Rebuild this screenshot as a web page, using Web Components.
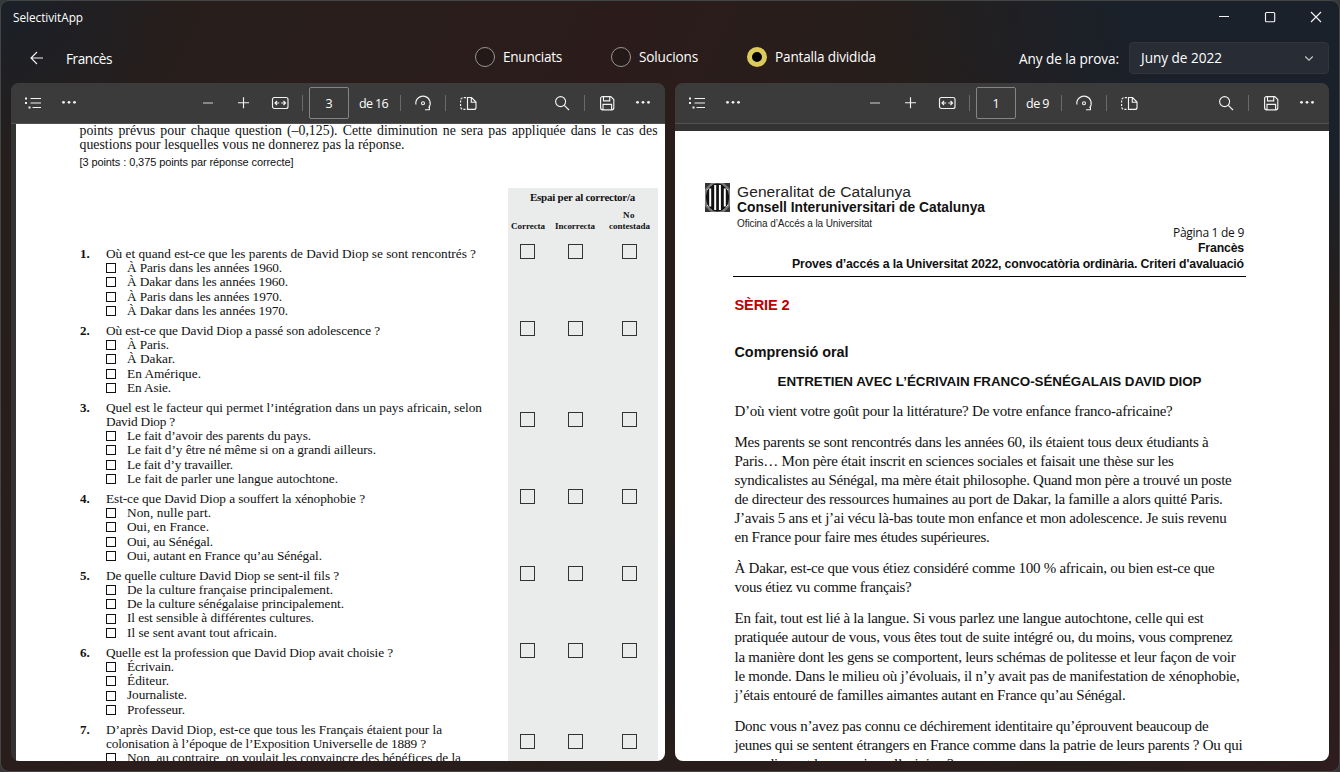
<!DOCTYPE html>
<html lang="ca">
<head>
<meta charset="utf-8">
<title>SelectivitApp</title>
<style>
html,body{margin:0;height:100%;overflow:hidden;background:#34383a}
</style>
</head>
<body>
<selectivit-app></selectivit-app>
<script>
const ICONS = {
  back:'<path d="M15 8H3M9 2L3 8l6 6" />',
  list:'<path d="M5.5 3.5H16M5.5 8H16M7.5 12.5H16"/><path d="M0 3.5h2M0 8h2M3.5 12.5h2" stroke-width="2"/>',
  dots:'<g fill="currentColor" stroke="none"><circle cx="2.5" cy="7.3" r="1.4"/><circle cx="8" cy="7.3" r="1.4"/><circle cx="13.5" cy="7.3" r="1.4"/></g>',
  minus:'<path d="M3 8h10" stroke="#a2a2a2" stroke-width="1.5"/>',
  plus:'<path d="M7.5 2.2v11M2 7.7h11"/>',
  fit:'<rect x=".5" y="2.5" width="15.5" height="11" rx="2"/><path d="M3.4 8h3.8M9.3 8h3.8M5 6L3 8l2 2M11.5 6l2 2-2 2"/>',
  rotate:'<path d="M.9 9.5A7.2 7.2 0 1 1 13.6 12.9M10 14.7h4.4V10.5" /><circle cx="8" cy="8.2" r="1.5"/>',
  view:'<path d="M6 2.6H3.2A2.6 2.6 0 0 0 .6 5.2v6.6a2.6 2.6 0 0 0 2.6 2.6H6" stroke-dasharray="2.2 1.3"/><path d="M7.5 2.5h4l4.5 4.6v5.3a2 2 0 0 1-2 2H7.5zM11.3 2.6v4.6H16"/>',
  search:'<circle cx="6.6" cy="6.6" r="5"/><path d="M10.3 10.3L15 15"/>',
  save:'<path d="M1.6 3.6a2 2 0 0 1 2-2h8.2l3 3v8.2a2 2 0 0 1-2 2H3.6a2 2 0 0 1-2-2zM4.5 1.8v4h6.2v-4M4 14.6V9.3h8.6v5.3"/>',
  min:'<path d="M3 7.5h10"/>',
  max:'<rect x="3.5" y="3.5" width="9.2" height="9.2" rx="1"/>',
  close:'<path d="M3 3l10 10M13 3L3 13"/>',
  chevron:'<path d="M4.2 6.5L8 10.2l3.8-3.7" stroke="#c8c8cc"/>'
};

class UiIcon extends HTMLElement {
  connectedCallback() {
    this.attachShadow({mode:'open'}).innerHTML = `<style>
      :host{display:inline-flex;width:36px;height:32px;align-items:center;justify-content:center;color:#f2f2f2;flex:none}
      svg{display:block;overflow:visible}</style>
      <svg width="16" height="16" viewBox="0 0 16 16" fill="none" stroke="currentColor" stroke-width="1.15">${ICONS[this.getAttribute('name')]}</svg>`;
  }
}

class UiRadio extends HTMLElement {
  connectedCallback() {
    this.attachShadow({mode:'open'}).innerHTML = `<style>
      :host{display:flex;align-items:center;gap:8px;width:136px;height:20px}
      i{box-sizing:border-box;width:20px;height:20px;border-radius:50%;border:1px solid #9c9492;background:#231918;flex:none}
      :host([checked]) i{border:5px solid #dccb5c;background:#000}
      </style><i></i><slot></slot>`;
  }
}

class PdfToolbar extends HTMLElement {
  connectedCallback() {
    const page = this.getAttribute('page'), total = this.getAttribute('total'), w = this.getAttribute('total-width');
    this.attachShadow({mode:'open'}).innerHTML = `<style>
      :host{display:flex;align-items:center;height:40px;background:#3b3b3b;border-bottom:1px solid #525252;flex:none;padding:0 4px;color:#fff;font:12.5px "Open Sans","Noto Sans",sans-serif}
      .mid{display:flex;align-items:center;margin-left:calc(var(--mid) - 76px)}
      .end{display:flex;align-items:center;margin-left:auto}
      hr{border:0;margin:0 4px;width:1px;height:16px;background:#6a6a6a}
      .page{box-sizing:border-box;width:40px;height:32px;border:1px solid #858585;border-radius:2px;display:flex;align-items:center;justify-content:center;margin:0 10px 0 2px}
      .total{margin-right:8px}
      </style>
      <ui-icon name="list"></ui-icon><ui-icon name="dots"></ui-icon>
      <div class="mid"><ui-icon name="minus"></ui-icon><ui-icon name="plus"></ui-icon><ui-icon name="fit"></ui-icon><hr>
      <div class="page">${page}</div><fit-line class="total" w="${w}">de ${total}</fit-line><hr>
      <ui-icon name="rotate"></ui-icon><hr><ui-icon name="view"></ui-icon></div>
      <div class="end"><ui-icon name="search"></ui-icon><hr><ui-icon name="save"></ui-icon><ui-icon name="dots"></ui-icon></div>`;
  }
}

class PdfPane extends HTMLElement {
  connectedCallback() {
    this.attachShadow({mode:'open'}).innerHTML = `<style>
      :host{display:flex;flex-direction:column;width:654px;height:678px;border-radius:8px;overflow:hidden;background:#333}
      .view{flex:1;min-height:0;overflow:hidden;padding:var(--gutter)}
      </style><slot name="bar"></slot><div class="view"><slot></slot></div>`;
  }
}

class ExamQuestion extends HTMLElement {
  connectedCallback() {
    const lines = this.getAttribute('lines').split('|').map(s => s.split('~'));
    const opts = this.getAttribute('options').split('|').map(s => s.split('~'));
    this.attachShadow({mode:'open'}).innerHTML = `<style>
      :host{display:grid;grid-template-columns:26px 402px 150px;font:13.3px/14px "Liberation Serif",serif;color:#111}
      b{padding-top:4px;font-size:13px}
      .body{padding:4px 0 1.4px}
      .opt{display:flex;align-items:center;height:14.4px;line-height:14.4px;gap:11px}
      .opt i{box-sizing:border-box;width:10px;height:10px;border:1px solid #111;flex:none}
      .score{background:#eaecec;display:grid;grid-template-columns:15px 15px 15px;column-gap:33px;padding:${1+14*(lines.length-1)}px 0 0 12px;align-content:start}
      .score i{box-sizing:border-box;height:15px;border:1px solid #333}
      .score i:last-child{margin:0 -6px 0 6px}
      </style><b>${this.getAttribute('n')}.</b>
      <div class="body">${lines.map(l=>`<fit-line w="${l[1]}">${l[0]}</fit-line>`).join('')}
      ${opts.map(l=>`<div class="opt"><i></i><fit-line w="${l[1]}">${l[0]}</fit-line></div>`).join('')}</div>
      <div class="score"><i></i><i></i><i></i></div>`;
  }
}

class ExamPage extends HTMLElement {
  connectedCallback() {
    this.attachShadow({mode:'open'}).innerHTML = `<style>
      :host{display:block;box-sizing:border-box;height:637px;overflow:hidden;background:#fff;padding-left:64px;color:#111;font:13.8px/14px "Liberation Serif",serif}
      .intro{margin-left:-.5px}
      .note{font:11px/14px "Liberation Sans",sans-serif;margin-top:2.9px;margin-left:-.5px}
      .head{display:grid;justify-content:end;width:578px;margin-top:19px}
      .box{box-sizing:border-box;width:150px;height:55px;background:#eaecec;padding:3px 0 0 3px;font:bold 11px/12px "Liberation Serif",serif}
      .title{margin-left:19px}
      .cols{display:flex;align-items:flex-end;gap:10px;font-size:9px;line-height:11px;margin-top:7.5px}
      .cols div{margin-left:4px}
      .cols div fit-line:first-child{margin-left:14px}
      </style>
      <fit-line class="intro" w="578" word>points prévus pour chaque question (–0,125). Cette diminution ne sera pas appliquée dans le cas des</fit-line>
      <fit-line class="intro" w="325">questions pour lesquelles vous ne donnerez pas la réponse.</fit-line>
      <fit-line class="note" w="214">[3 points : 0,375 points par réponse correcte]</fit-line>
      <div class="head"><div class="box"><fit-line class="title" w="105">Espai per al corrector/a</fit-line>
      <div class="cols"><fit-line w="34">Correcta</fit-line><fit-line w="40">Incorrecta</fit-line><div><fit-line w="12">No</fit-line><fit-line w="41">contestada</fit-line></div></div></div></div>
      <exam-question n="1" lines="Où et quand est-ce que les parents de David Diop se sont rencontrés ?~370" options="À Paris dans les années 1960.~155|À Dakar dans les années 1960.~161|À Paris dans les années 1970.~155|À Dakar dans les années 1970.~161"></exam-question>
      <exam-question n="2" lines="Où est-ce que David Diop a passé son adolescence ?~274" options="À Paris.~42|À Dakar.~48|En Amérique.~74|En Asie.~44"></exam-question>
      <exam-question n="3" lines="Quel est le facteur qui permet l’intégration dans un pays africain, selon~376|David Diop ?~69" options="Le fait d’avoir des parents du pays.~184|Le fait d’y être né même si on a grandi ailleurs.~249|Le fait d’y travailler.~106|Le fait de parler une langue autochtone.~211"></exam-question>
      <exam-question n="4" lines="Est-ce que David Diop a souffert la xénophobie ?~259" options="Non, nulle part.~84|Oui, en France.~82|Oui, au Sénégal.~86|Oui, autant en France qu’au Sénégal.~195"></exam-question>
      <exam-question n="5" lines="De quelle culture David Diop se sent-il fils ?~233" options="De la culture française principalement.~206|De la culture sénégalaise principalement.~217|Il est sensible à différentes cultures.~187|Il se sent avant tout africain.~150"></exam-question>
      <exam-question n="6" lines="Quelle est la profession que David Diop avait choisie ?~287" options="Écrivain.~47|Éditeur.~42|Journaliste.~60|Professeur.~58"></exam-question>
      <exam-question n="7" lines="D’après David Diop, est-ce que tous les Français étaient pour la~336|colonisation à l’époque de l’Exposition Universelle de 1889 ?~320" options="Non, au contraire, on voulait les convaincre des bénéfices de la~334"></exam-question>`;
  }
}

class SolutionPage extends HTMLElement {
  connectedCallback() {
    const paras = [
      [['D’où vient votre goût pour la littérature? De votre enfance franco-africaine?',438]],
      [['Mes parents se sont rencontrés dans les années 60, ils étaient tous deux étudiants à',474],['Paris… Mon père était inscrit en sciences sociales et faisait une thèse sur les',439],['syndicalistes au Sénégal, ma mère était philosophe. Quand mon père a trouvé un poste',497],['de directeur des ressources humaines au port de Dakar, la famille a alors quitté Paris.',488],['J’avais 5 ans et j’ai vécu là-bas toute mon enfance et mon adolescence. Je suis revenu',492],['en France pour faire mes études supérieures.',255]],
      [['À Dakar, est-ce que vous étiez considéré comme 100 % africain, ou bien est-ce que',480],['vous étiez vu comme français?',177]],
      [['En fait, tout est lié à la langue. Si vous parlez une langue autochtone, celle qui est',469],['pratiquée autour de vous, vous êtes tout de suite intégré ou, du moins, vous comprenez',498],['la manière dont les gens se comportent, leurs schémas de politesse et leur façon de voir',501],['le monde. Dans le milieu où j’évoluais, il n’y avait pas de manifestation de xénophobie,',505],['j’étais entouré de familles aimantes autant en France qu’au Sénégal.',391]],
      [['Donc vous n’avez pas connu ce déchirement identitaire qu’éprouvent beaucoup de',474],['jeunes qui se sentent étrangers en France comme dans la patrie de leurs parents ? Ou qui',508],['revendiquent leurs racines d’origine ?',219]]
    ];
    this.attachShadow({mode:'open'}).innerHTML = `<style>
      :host{display:block;box-sizing:border-box;height:630px;overflow:hidden;background:#fff;padding:52px 0 0 29.5px;color:#111;font-family:"Liberation Sans",sans-serif}
      .brand{display:flex;gap:7.5px;height:48px}
      .brand svg{flex:none;display:block}
      .g{font-size:15.5px;line-height:17px;color:#222}
      .c{font-size:13.8px;font-weight:bold;line-height:16px}
      .o{font-size:10px;line-height:15px;color:#222}
      .meta{width:539.5px;display:flex;flex-direction:column;align-items:flex-end;font-size:12.3px;font-weight:bold;line-height:16px}
      .pg{font:12px/16px "Open Sans",sans-serif;margin-top:-6px}
      .fr{line-height:15px}
      hr{border:0;margin:4px 0 0 28.5px;width:513px;height:1px;background:#000}
      .text{margin-left:30px}
      h2,h3,h4,p{margin:0}
      h2{font-size:14.6px;line-height:18px;color:#c00000;margin-top:19px}
      h3{font-size:14.4px;line-height:18px;margin-top:29px}
      h4{font-size:13.4px;line-height:18px;margin:11.5px 0 11px 43px}
      p{font:15px/19.1px "Liberation Serif",serif;margin-bottom:12px}
      </style>
      <div class="brand"><svg width="25" height="29" viewBox="0 0 25 29"><rect width="25" height="29" fill="#777"/><path d="M0 0h6L0 6zM25 0v6l-6-6zM0 29v-6l6 6zM25 29h-6l6-6z" fill="#333"/><path d="M2 7l5-5M18 2l5 5M2 22l5 5M18 27l5-5" stroke="#ddd"/><ellipse cx="12.5" cy="14.5" rx="11.5" ry="14" fill="#111"/><path d="M5.2 5.5v18M10.2 2v25M14.9 2v25M19.8 5.5v18" stroke="#fff" stroke-width="2"/></svg>
      <div><fit-line class="g" w="174">Generalitat de Catalunya</fit-line><fit-line class="c" w="248">Consell Interuniversitari de Catalunya</fit-line><fit-line class="o" w="135">Oficina d’Accés a la Universitat</fit-line></div></div>
      <div class="meta"><fit-line class="pg" w="71">Pàgina 1 de 9</fit-line><fit-line class="fr" w="46">Francès</fit-line><fit-line w="452">Proves d’accés a la Universitat 2022, convocatòria ordinària. Criteri d'avaluació</fit-line></div>
      <hr><div class="text"><h2><fit-line w="55">SÈRIE 2</fit-line></h2><h3><fit-line w="114">Comprensió oral</fit-line></h3>
      <h4><fit-line w="424">ENTRETIEN AVEC L’ÉCRIVAIN FRANCO-SÉNÉGALAIS DAVID DIOP</fit-line></h4>
      ${paras.map(p=>`<p>${p.map(l=>`<fit-line w="${l[1]}">${l[0]}</fit-line>`).join('')}</p>`).join('')}</div>`;
  }
}

class SelectivitApp extends HTMLElement {
  connectedCallback() {
    this.attachShadow({mode:'open'}).innerHTML = `<style>
      :host{display:flex;flex-direction:column;box-sizing:border-box;width:1340px;height:772px;border:1px solid #444646;border-radius:9px;overflow:hidden;color:#fff;font:13.6px/20px "Open Sans","Noto Sans",sans-serif;
        background:radial-gradient(ellipse 480px 330px at 100% 0,#1a212a 45%,#1a212a00),radial-gradient(ellipse 190px 170px at 0 0,#1b2028,#1b202800),radial-gradient(circle 120px at 668px 625px,#1c1e24,#1c1e2400),linear-gradient(115deg,#251e1c 0,#291e1b 20%,#2b1c1b 38%,#261e1a 55%,#2b1c1b 72%,#261e1a 84%,#2e1c1e)}
      .title{display:flex;align-items:center;height:31px;padding:1px 5px 0 12px;box-sizing:border-box;font-size:11.8px}
      .title nav{margin-left:auto;display:flex;gap:10px}
      .cmd{display:flex;height:51px;box-sizing:border-box;padding:10px 10px 0 17px}
      .cmd .name{margin:7px 0 0 12px}
      .radios{display:flex;margin-top:5px}
      .year{margin:7px 10px 0 0}
      .left{display:flex;width:457px}
      .right{display:flex;margin-left:auto}
      .combo{box-sizing:border-box;width:200px;height:32px;border:1px solid #31353c;border-radius:4px;background:#282c34;display:flex;align-items:center;justify-content:space-between;padding:0 1px 0 11px}
      .panes{display:flex;gap:10px;padding-left:10px}
      </style>
      <div class="title"><fit-line w="70">SelectivitApp</fit-line><nav><ui-icon name="min"></ui-icon><ui-icon name="max"></ui-icon><ui-icon name="close"></ui-icon></nav></div>
      <div class="cmd"><div class="left"><ui-icon name="back"></ui-icon><fit-line class="name" w="46">Francès</fit-line></div>
      <div class="radios"><ui-radio><fit-line w="59">Enunciats</fit-line></ui-radio><ui-radio><fit-line w="59">Solucions</fit-line></ui-radio><ui-radio checked><fit-line w="101">Pantalla dividida</fit-line></ui-radio></div>
      <div class="right"><fit-line class="year" w="100">Any de la prova:</fit-line><div class="combo"><fit-line w="81">Juny de 2022</fit-line><ui-icon name="chevron"></ui-icon></div></div></div>
      <div class="panes">
      <pdf-pane style="--gutter:0 0 0 5px"><pdf-toolbar slot="bar" page="3" total="16" total-width="29" style="--mid:179px"></pdf-toolbar><exam-page></exam-page></pdf-pane>
      <pdf-pane style="--gutter:7px 0 0 0"><pdf-toolbar slot="bar" page="1" total="9" total-width="23" style="--mid:182px"></pdf-toolbar><solution-page></solution-page></pdf-pane>
      </div>`;
  }
}

/* A single line of text set to an exact measure by tracking, or by word spacing with the "word" attribute. */
class FitLine extends HTMLElement {
  connectedCallback() {
    this.attachShadow({mode:'open'}).innerHTML = `<style>:host{display:block;width:max-content;white-space:nowrap;flex:none}</style><slot></slot>`;
    const text = this.textContent, want = +this.getAttribute('w'), have = this.getBoundingClientRect().width;
    if (this.hasAttribute('word')) this.style.wordSpacing = (want - have) / (text.split(' ').length - 1) + 'px';
    else this.style.letterSpacing = (want - have) / text.length + 'px';
  }
}

customElements.define('selectivit-app', SelectivitApp);
customElements.define('pdf-pane', PdfPane);
customElements.define('pdf-toolbar', PdfToolbar);
customElements.define('exam-page', ExamPage);
customElements.define('exam-question', ExamQuestion);
customElements.define('solution-page', SolutionPage);
customElements.define('ui-radio', UiRadio);
customElements.define('ui-icon', UiIcon);
customElements.define('fit-line', FitLine);
</script>
</body>
</html>
